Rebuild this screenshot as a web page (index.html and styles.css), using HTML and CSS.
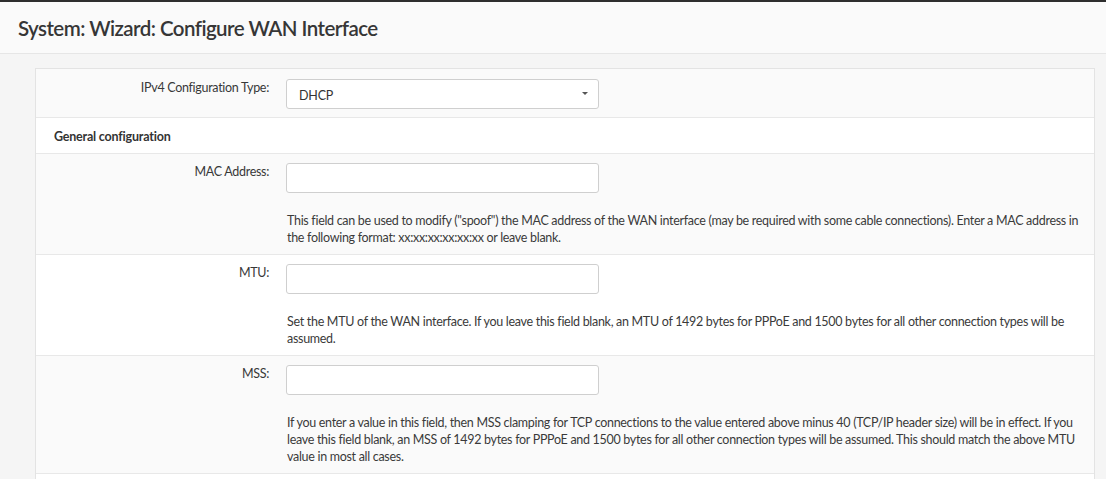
FILE: index.html
```html
<!DOCTYPE html>
<html lang="en">
<head>
<meta charset="utf-8">
<title>System: Wizard: Configure WAN Interface</title>
<link rel="stylesheet" href="styles.css">
</head>
<body>
<div class="topbar"></div>
<header class="page-head">
  <h1 class="page-title">System: Wizard: Configure WAN Interface</h1>
</header>
<main class="content">
  <section class="card">
    <div class="row row-stripe row-first">
      <div class="label">IPv4 Configuration Type:</div>
      <div class="field">
        <div class="select"><span class="select-value">DHCP</span><span class="caret"></span></div>
      </div>
    </div>
    <div class="row row-section">
      <div class="section-title">General configuration</div>
    </div>
    <div class="row row-stripe">
      <div class="label">MAC Address:</div>
      <div class="field">
        <div class="input"></div>
        <div class="help">This field can be used to modify ("spoof") the MAC address of the WAN interface (may be required with some cable connections). Enter a MAC address in the following format: xx:xx:xx:xx:xx:xx or leave blank.</div>
      </div>
    </div>
    <div class="row">
      <div class="label">MTU:</div>
      <div class="field">
        <div class="input"></div>
        <div class="help">Set the MTU of the WAN interface. If you leave this field blank, an MTU of 1492 bytes for PPPoE and 1500 bytes for all other connection types will be assumed.</div>
      </div>
    </div>
    <div class="row row-stripe">
      <div class="label">MSS:</div>
      <div class="field">
        <div class="input"></div>
        <div class="help">If you enter a value in this field, then MSS clamping for TCP connections to the value entered above minus 40 (TCP/IP header size) will be in effect. If you leave this field blank, an MSS of 1492 bytes for PPPoE and 1500 bytes for all other connection types will be assumed. This should match the above MTU value in most all cases.</div>
      </div>
    </div>
    <div class="row row-tail"></div>
  </section>
</main>
</body>
</html>
```

FILE: styles.css
```css
* { box-sizing: border-box; }
html, body { margin: 0; padding: 0; }
body {
  background: #f5f5f5;
  font-family: Lato, "Open Sans", "Liberation Sans", sans-serif;
  font-size: 12.5px;
  line-height: 17px;
  color: #383838;
  height: 479px;
  overflow: hidden;
}
.topbar { height: 2px; background: #2e2e2e; }
.page-head {
  height: 52px;
  background: #fafafa;
  border-bottom: 1px solid #e6e6e6;
  padding-left: 18px;
}
.page-title {
  margin: 0;
  font-size: 20.5px;
  line-height: 52px;
  font-weight: 600;
  color: #363636;
  letter-spacing: -0.55px;
}
.content { padding: 14px 11px 0 35px; }
.card {
  background: #fff;
  border: 1px solid #e3e3e3;
  border-bottom: 0;
}
.row {
  display: grid;
  grid-template-columns: 250px 1fr;
  border-bottom: 1px solid #e8e8e8;
  padding: 9px 0 8px;
  background: #fff;
}
.row-stripe { background: #fafafa; }
.row-first { padding-top: 10px; padding-bottom: 8px; }
.row-section { display: block; padding: 10px 18px 8px; }
.row-tail { height: 20px; border-bottom: 0; }
.section-title { font-weight: 700; color: #333; letter-spacing: -0.2px; }
.label {
  text-align: right;
  padding-right: 17px;
  letter-spacing: -0.3px;
}
.field { padding-right: 12px; }
.select, .input {
  width: 313px;
  height: 30px;
  background: #fff;
  border: 1px solid #cfcfcf;
  border-radius: 3px;
}
.select {
  display: flex;
  align-items: center;
  justify-content: space-between;
  padding: 2px 10px 0 12px;
}
.select-value { color: #333; letter-spacing: -0.2px; }
.caret {
  width: 0; height: 0;
  border-top: 3px solid #555;
  border-left: 3px solid transparent;
  border-right: 3px solid transparent;
  margin-top: -3px;
}
.help {
  margin-top: 19px;
  padding-left: 1px;
  letter-spacing: -0.3px;
  color: #3a3a3a;
}
```
